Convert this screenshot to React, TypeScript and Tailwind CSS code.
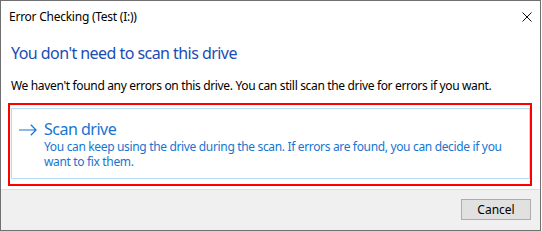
import React from 'react';

const font = { fontFamily: '"Noto Sans", "Open Sans", sans-serif' };

function ArrowIcon() {
  return (
    <svg width="19" height="12" viewBox="0 0 19 12" fill="none" stroke="#1874d0" strokeWidth="1.3">
      <path d="M0 6h18M12.5 0.5L18 6l-5.5 5.5" />
    </svg>
  );
}

function CloseIcon() {
  return (
    <svg width="10" height="10" viewBox="0 0 10 10" stroke="#111" strokeWidth="1">
      <path d="M0.5 0.5l9 9M9.5 0.5l-9 9" />
    </svg>
  );
}

export default function App() {
  return (
    <div className="w-[542px] h-[231px] bg-white" style={font}>
      <div className="w-[541px] h-[231px] border border-[#707070] bg-white flex flex-col">
        {/* Title bar */}
        <div className="h-[31px] flex items-center justify-between pl-[8px] pr-[8px] shrink-0">
          <span className="text-[12px] tracking-[-0.25px] text-black">Error Checking (Test (I:))</span>
          <CloseIcon />
        </div>

        <h1 className="mt-[10px] ml-[10px] text-[16px] leading-[22px] tracking-[-0.55px] text-[#1b4db3]">
          You don't need to scan this drive
        </h1>

        <p className="mt-[14px] ml-[10px] text-[12px] leading-[16px] tracking-[-0.34px] text-black whitespace-nowrap">
          We haven't found any errors on this drive. You can still scan the drive for errors if you want.
        </p>

        {/* highlighted command link */}
        <div className="mt-[9px] ml-[7px] mr-[8px] h-[83px] border-2 border-[#ff0000] pt-[3px] pl-[1px] pb-[5px] shrink-0">
          <div className="h-[71px] border border-[#bcdcf4] flex pt-[10px] pl-[7px]">
            <div className="w-[18px] h-[20px] flex items-center mt-[1px]">
              <ArrowIcon />
            </div>
            <div className="ml-[7px] text-[#1874d0]">
              <div className="text-[16px] leading-[20px] tracking-[-0.5px]">Scan drive</div>
              <div className="text-[12px] leading-[15px] tracking-[-0.34px] whitespace-nowrap">
                <div>You can keep using the drive during the scan. If errors are found, you can decide if you</div>
                <div>want to fix them.</div>
              </div>
            </div>
          </div>
        </div>

        {/* Footer */}
        <div className="mt-[3px] border-t border-[#dfdfdf] bg-[#f0f0f0] flex-1 flex justify-end items-start pt-[9px] pr-[9px]">
          <button className="w-[70px] h-[21px] border border-[#adadad] bg-[#e1e1e1] text-[12px] text-black leading-none">
            Cancel
          </button>
        </div>
      </div>
    </div>
  );
}
